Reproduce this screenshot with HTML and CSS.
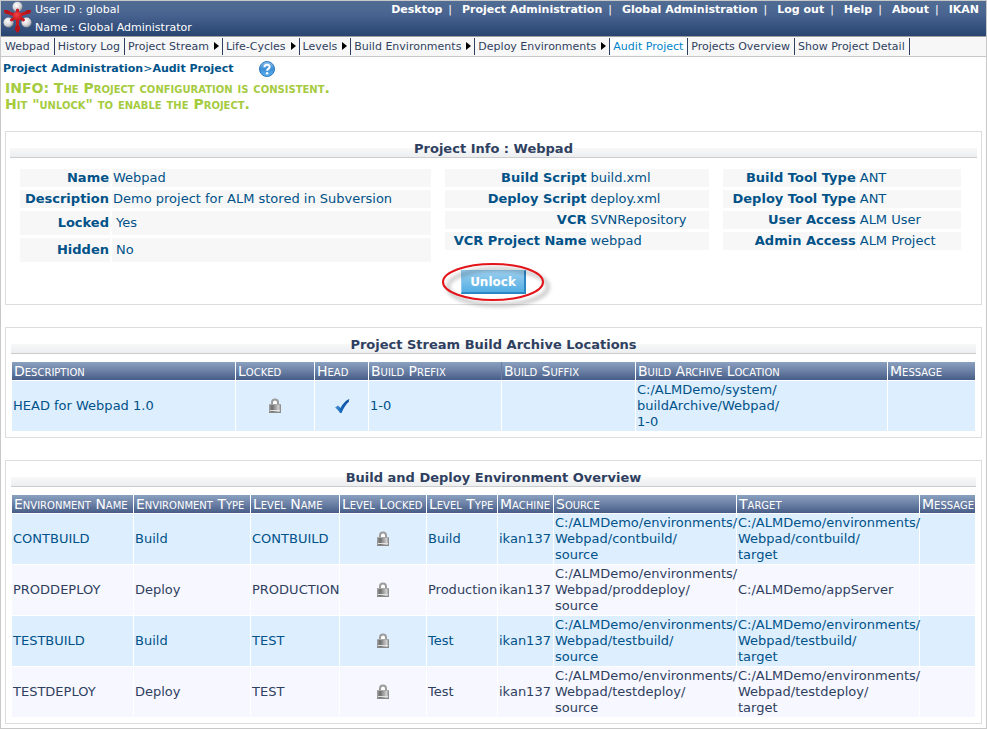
FILE: index.html
```html
<!DOCTYPE html>
<html lang="en">
<head>
<meta charset="utf-8">
<title>Audit Project</title>
<link rel="stylesheet" href="styles.css">
</head>
<body>
<svg class="defs" width="0" height="0" aria-hidden="true">
  <defs>
    <linearGradient id="lockBody" x1="0" x2="1" y1="0" y2="0">
      <stop offset="0" stop-color="#a5a5a5"/><stop offset=".25" stop-color="#6c6c6c"/><stop offset=".8" stop-color="#d0d0d0"/><stop offset="1" stop-color="#808080"/>
    </linearGradient>
    <linearGradient id="check" x1="0" x2="1" y1="0" y2="0">
      <stop offset="0" stop-color="#5d9bd0"/><stop offset=".4" stop-color="#1268bd"/><stop offset="1" stop-color="#0c4a96"/>
    </linearGradient>
    <radialGradient id="ball" cx=".4" cy=".35" r=".7">
      <stop offset="0" stop-color="#fff"/><stop offset=".6" stop-color="#d5d5d8"/><stop offset="1" stop-color="#85858c"/>
    </radialGradient>
    <radialGradient id="core" cx=".4" cy=".35" r=".7">
      <stop offset="0" stop-color="#f04545"/><stop offset="1" stop-color="#c4141b"/>
    </radialGradient>
    <linearGradient id="help" x1="0" x2="0" y1="0" y2="1">
      <stop offset="0" stop-color="#8fc4ee"/><stop offset=".5" stop-color="#3d8fd6"/><stop offset="1" stop-color="#5db4ee"/>
    </linearGradient>
    <symbol id="lock" viewBox="0 0 14 16">
      <path d="M4 8V4.500a3 3 0 0 1 6 0V8" fill="#fff" stroke="#9c9c9c" stroke-width="2"/>
      <rect x="1" y="6" width="12" height="9" fill="url(#lockBody)"/>
      <path d="M1 6.500h12" stroke="#aaa"/>
      <path d="M2 12.500h10" stroke="#e2e2e2"/>
      <path d="M1 14.500h12" stroke="#888"/>
    </symbol>
  </defs>
</svg>
<div class="page">
  <header class="banner">
    <svg class="logo" viewBox="0 0 30 32" aria-hidden="true">
      <circle cx="14.500" cy="5.700" r="5" fill="url(#ball)"/>
      <circle cx="5.500" cy="21.500" r="5" fill="url(#ball)"/>
      <circle cx="23.500" cy="21.500" r="5" fill="url(#ball)"/>
      <path d="M14.500 15L2.500 10.500M14.500 15l12-4.500M14.500 15v15M14.500 15V9M14.500 15l-6 4M14.500 15l6 4" stroke="#c8171e" stroke-width="3" stroke-linecap="round"/>
      <path d="M1 9h4l2 2-2 2H3zM28 9h-4l-2 2 2 2h2zM12 26l2.500-2 2.500 2v3l-2.500 2L12 29z" fill="#b3131a"/>
      <circle cx="14.500" cy="15" r="4.500" fill="url(#core)"/>
    </svg>
    <div class="user">
      <div>User ID : global</div>
      <div>Name : Global Administrator</div>
    </div>
    <nav class="topnav">
      <a href="#">Desktop</a><a href="#">Project Administration</a><a href="#">Global Administration</a><a href="#">Log out</a><a href="#">Help</a><a href="#">About</a><a href="#">IKAN</a>
    </nav>
  </header>
  <nav class="menu">
    <a href="#">Webpad</a>
    <a href="#">History Log</a>
    <a class="sub" href="#">Project Stream</a>
    <a class="sub" href="#">Life-Cycles</a>
    <a class="sub" href="#">Levels</a>
    <a class="sub" href="#">Build Environments</a>
    <a class="sub" href="#">Deploy Environments</a>
    <a class="current" href="#">Audit Project</a>
    <a href="#">Projects Overview</a>
    <a href="#">Show Project Detail</a>
  </nav>
  <div class="crumbs">
    <span><b>Project Administration</b>&gt;<b>Audit Project</b></span>
    <a class="help" href="#" aria-label="Help">
      <svg viewBox="0 0 16 16" aria-hidden="true">
        <circle cx="8" cy="8" r="7.500" fill="url(#help)" stroke="#2f78bd"/>
        <path d="M5.500 6.200C5.500 3 10.600 3 10.600 6c0 1.900-2.500 1.900-2.500 3.800" fill="none" stroke="#fff" stroke-width="2"/>
        <circle cx="8.100" cy="12.300" r="1.200" fill="#fff"/>
      </svg>
    </a>
  </div>
  <p class="notice">INFO: The Project configuration is consistent.<br>Hit "unlock" to enable the Project.</p>

  <section class="panel info">
    <h2>Project Info : Webpad</h2>
    <div class="facts">
      <table class="first">
        <tr><th scope="row">Name</th><td>Webpad</td></tr>
        <tr><th scope="row">Description</th><td>Demo project for ALM stored in Subversion</td></tr>
        <tr class="tall"><th scope="row">Locked</th><td>Yes</td></tr>
        <tr class="tall"><th scope="row">Hidden</th><td>No</td></tr>
      </table>
      <table class="second">
        <tr><th scope="row">Build Script</th><td>build.xml</td></tr>
        <tr><th scope="row">Deploy Script</th><td>deploy.xml</td></tr>
        <tr><th scope="row">VCR</th><td>SVNRepository</td></tr>
        <tr><th scope="row">VCR Project Name</th><td>webpad</td></tr>
      </table>
      <table class="third">
        <tr><th scope="row">Build Tool Type</th><td>ANT</td></tr>
        <tr><th scope="row">Deploy Tool Type</th><td>ANT</td></tr>
        <tr><th scope="row">User Access</th><td>ALM User</td></tr>
        <tr><th scope="row">Admin Access</th><td>ALM Project</td></tr>
      </table>
    </div>
    <div class="action">
      <button type="button">Unlock</button>
      <svg class="ring" viewBox="0 0 112 48" aria-hidden="true">
        <ellipse cx="56" cy="25" rx="50" ry="18" fill="none" stroke="#e3141a" stroke-width="2"/>
      </svg>
    </div>
  </section>

  <section class="panel">
    <h2>Project Stream Build Archive Locations</h2>
    <table class="grid">
      <colgroup><col class="w223"><col class="w78"><col class="w53"><col class="w132"><col class="w133"><col><col class="w87"></colgroup>
      <thead><tr><th>Description</th><th>Locked</th><th>Head</th><th class="joined">Build Prefix</th><th>Build Suffix</th><th>Build Archive Location</th><th>Message</th></tr></thead>
      <tbody>
        <tr><td>HEAD for Webpad 1.0</td><td class="icon"><svg class="lock" role="img" aria-label="Locked"><use href="#lock"/></svg></td><td class="icon"><svg class="tick" viewBox="0 0 16 16" role="img" aria-label="Yes"><path d="M1 9.500L4 7.500l2.500 2.500C8.500 6 12 2 15.500 1c-.5 1-1 1.500-.5 2.500C12 6.500 9.500 10 7.500 15H6C4.500 12.500 3 11 1 9.500z" fill="url(#check)"/></svg></td><td>1-0</td><td></td><td>C:/ALMDemo/system/<br>buildArchive/Webpad/<br>1-0</td><td></td></tr>
      </tbody>
    </table>
  </section>

  <section class="panel">
    <h2>Build and Deploy Environment Overview</h2>
    <table class="grid">
      <colgroup><col class="w121"><col class="w116"><col class="w88"><col class="w86"><col class="w70"><col class="w55"><col><col><col class="w55"></colgroup>
      <thead><tr><th>Environment Name</th><th>Environment Type</th><th>Level Name</th><th>Level Locked</th><th>Level Type</th><th>Machine</th><th>Source</th><th>Target</th><th>Message</th></tr></thead>
      <tbody>
        <tr><td>CONTBUILD</td><td>Build</td><td>CONTBUILD</td><td class="icon"><svg class="lock" role="img" aria-label="Locked"><use href="#lock"/></svg></td><td>Build</td><td>ikan137</td><td>C:/ALMDemo/environments/<br>Webpad/contbuild/<br>source</td><td>C:/ALMDemo/environments/<br>Webpad/contbuild/<br>target</td><td></td></tr>
        <tr><td>PRODDEPLOY</td><td>Deploy</td><td>PRODUCTION</td><td class="icon"><svg class="lock" role="img" aria-label="Locked"><use href="#lock"/></svg></td><td>Production</td><td>ikan137</td><td>C:/ALMDemo/environments/<br>Webpad/proddeploy/<br>source</td><td>C:/ALMDemo/appServer</td><td></td></tr>
        <tr><td>TESTBUILD</td><td>Build</td><td>TEST</td><td class="icon"><svg class="lock" role="img" aria-label="Locked"><use href="#lock"/></svg></td><td>Test</td><td>ikan137</td><td>C:/ALMDemo/environments/<br>Webpad/testbuild/<br>source</td><td>C:/ALMDemo/environments/<br>Webpad/testbuild/<br>target</td><td></td></tr>
        <tr><td>TESTDEPLOY</td><td>Deploy</td><td>TEST</td><td class="icon"><svg class="lock" role="img" aria-label="Locked"><use href="#lock"/></svg></td><td>Test</td><td>ikan137</td><td>C:/ALMDemo/environments/<br>Webpad/testdeploy/<br>source</td><td>C:/ALMDemo/environments/<br>Webpad/testdeploy/<br>target</td><td></td></tr>
      </tbody>
    </table>
  </section>
</div>
</body>
</html>
```
FILE: styles.css
```css
* { box-sizing: border-box; }
body {
  margin: 0;
  background: #fff;
  color: #005288;
  font: 13px/16px "DejaVu Sans", Verdana, sans-serif;
}
a { color: inherit; text-decoration: none; }
.defs { position: absolute; }
.page { border: 1px solid #c8c8c8; padding-bottom: 4px; }

.banner {
  display: flex;
  height: 36px;
  padding: 0 7px 0 2px;
  color: #fff;
  font-size: 11px;
  line-height: 18px;
  white-space: nowrap;
  background: linear-gradient(#526d93, #48638f 40%, #27436f);
  border-bottom: 1px solid #a0a0a0;
}
.logo { width: 30px; height: 32px; margin-right: 2px; flex: none; }
.user { flex: 1; }
.topnav { font-weight: bold; }
.topnav a + a::before { content: "|"; font-weight: normal; margin: 0 10px 0 6px; }

.menu {
  display: flex;
  height: 20px;
  padding: 1px 0 0 1px;
  background: #f7f7f7;
  border-bottom: 1px solid #c8c8c8;
  color: #2f3f5f;
  font-size: 11px;
  line-height: 18px;
  white-space: nowrap;
}
.menu a { height: 17px; padding: 0 4px 0 3px; border-right: 1px solid #2f3f5f; }
.menu .sub { padding: 0 3px; }
.menu .sub::after {
  content: "";
  display: inline-block;
  margin-left: 5px;
  border: 4px solid transparent;
  border-left: 5px solid #000;
  border-right: 0;
}
.menu .current { color: #0083c9; background: #fff; }

.crumbs { display: flex; gap: 25px; align-items: center; height: 23px; padding-left: 2px; font-size: 11px; }
.help, .help svg { display: block; width: 16px; height: 16px; }
.notice {
  margin: 0 4px 19px;
  color: #a5cb3f;
  font-size: 14px;
  font-weight: bold;
  font-variant: small-caps;
}

.panel { margin: 0 4px 22px; padding: 12px 5px 5px; border: 1px solid #ddd; }
.panel:last-child { margin-bottom: 0; }
h2 {
  margin: 0 0 7px;
  height: 14px;
  border-bottom: 1px solid #ccc;
  background: linear-gradient(#f8f8f8, #eceef0) 0 100% / 100% 9px no-repeat;
  color: #2f3f5f;
  font-size: 13px;
  line-height: 10px;
  text-align: center;
}
.info { padding: 12px 4px 5px; }
.facts { display: flex; align-items: flex-start; gap: 14px; padding: 4px 16px 0 10px; }
.facts table { border-spacing: 0; table-layout: fixed; }
.facts tr { height: 21px; }
.facts .tall { height: 27px; }
.facts th, .facts td {
  padding: 0 1px;
  border-bottom: 3px solid #fff;
  background: #f7f7f7;
  white-space: nowrap;
}
.facts th { text-align: right; border-right: 2px solid #fff; }
.facts td { text-align: left; }
.facts .tall td { padding-left: 4px; }
.first { flex: 411; }
.second { flex: 263; }
.third { flex: 238; }
.first th { width: 92px; }
.second th { width: 144px; }
.third th { width: 136px; }
.action { position: relative; width: 65px; margin: 5px auto 5px 451px; }
button {
  display: block;
  width: 65px;
  height: 24px;
  padding: 0;
  border: 1px solid #2c86c4;
  border-width: 1px 2px 2px 1px;
  border-color: #8ecbef #2c86c4 #2c86c4 #8ecbef;
  background: linear-gradient(#9ccfef, #53aee4);
  color: #fff;
  font: bold 12px/16px "DejaVu Sans", Verdana, sans-serif;
}
.ring {
  position: absolute;
  left: -24px;
  top: -13px;
  width: 112px;
  height: 48px;
  pointer-events: none;
  filter: drop-shadow(5px 5px 2px rgba(0, 0, 0, .4));
}

.grid { width: 100%; table-layout: fixed; border-spacing: 1px; }
.grid th, .grid td { padding: 1px; text-align: left; }
.grid th {
  height: 18px;
  padding: 0 2px;
  color: #fff;
  font-size: 14px;
  font-weight: normal;
  font-variant: small-caps;
  white-space: nowrap;
  background: linear-gradient(#8ba1c0, #6b80a5 50%, #465d87);
}
.grid .joined { box-shadow: 1px 0 #6b80a5; }
.grid td { height: 50px; background: #def; }
.grid tr:nth-child(even) td { background: #f7f7ff; color: #2f3f5f; }
.grid .icon { text-align: center; }
.lock { display: block; width: 14px; height: 16px; margin: 0 auto; }
.tick { display: block; width: 16px; height: 16px; margin: 0 auto; }
.w223 { width: 223px; }
.w133 { width: 133px; }
.w132 { width: 132px; }
.w121 { width: 121px; }
.w116 { width: 116px; }
.w88 { width: 88px; }
.w87 { width: 87px; }
.w86 { width: 86px; }
.w78 { width: 78px; }
.w70 { width: 70px; }
.w55 { width: 55px; }
.w53 { width: 53px; }
```
